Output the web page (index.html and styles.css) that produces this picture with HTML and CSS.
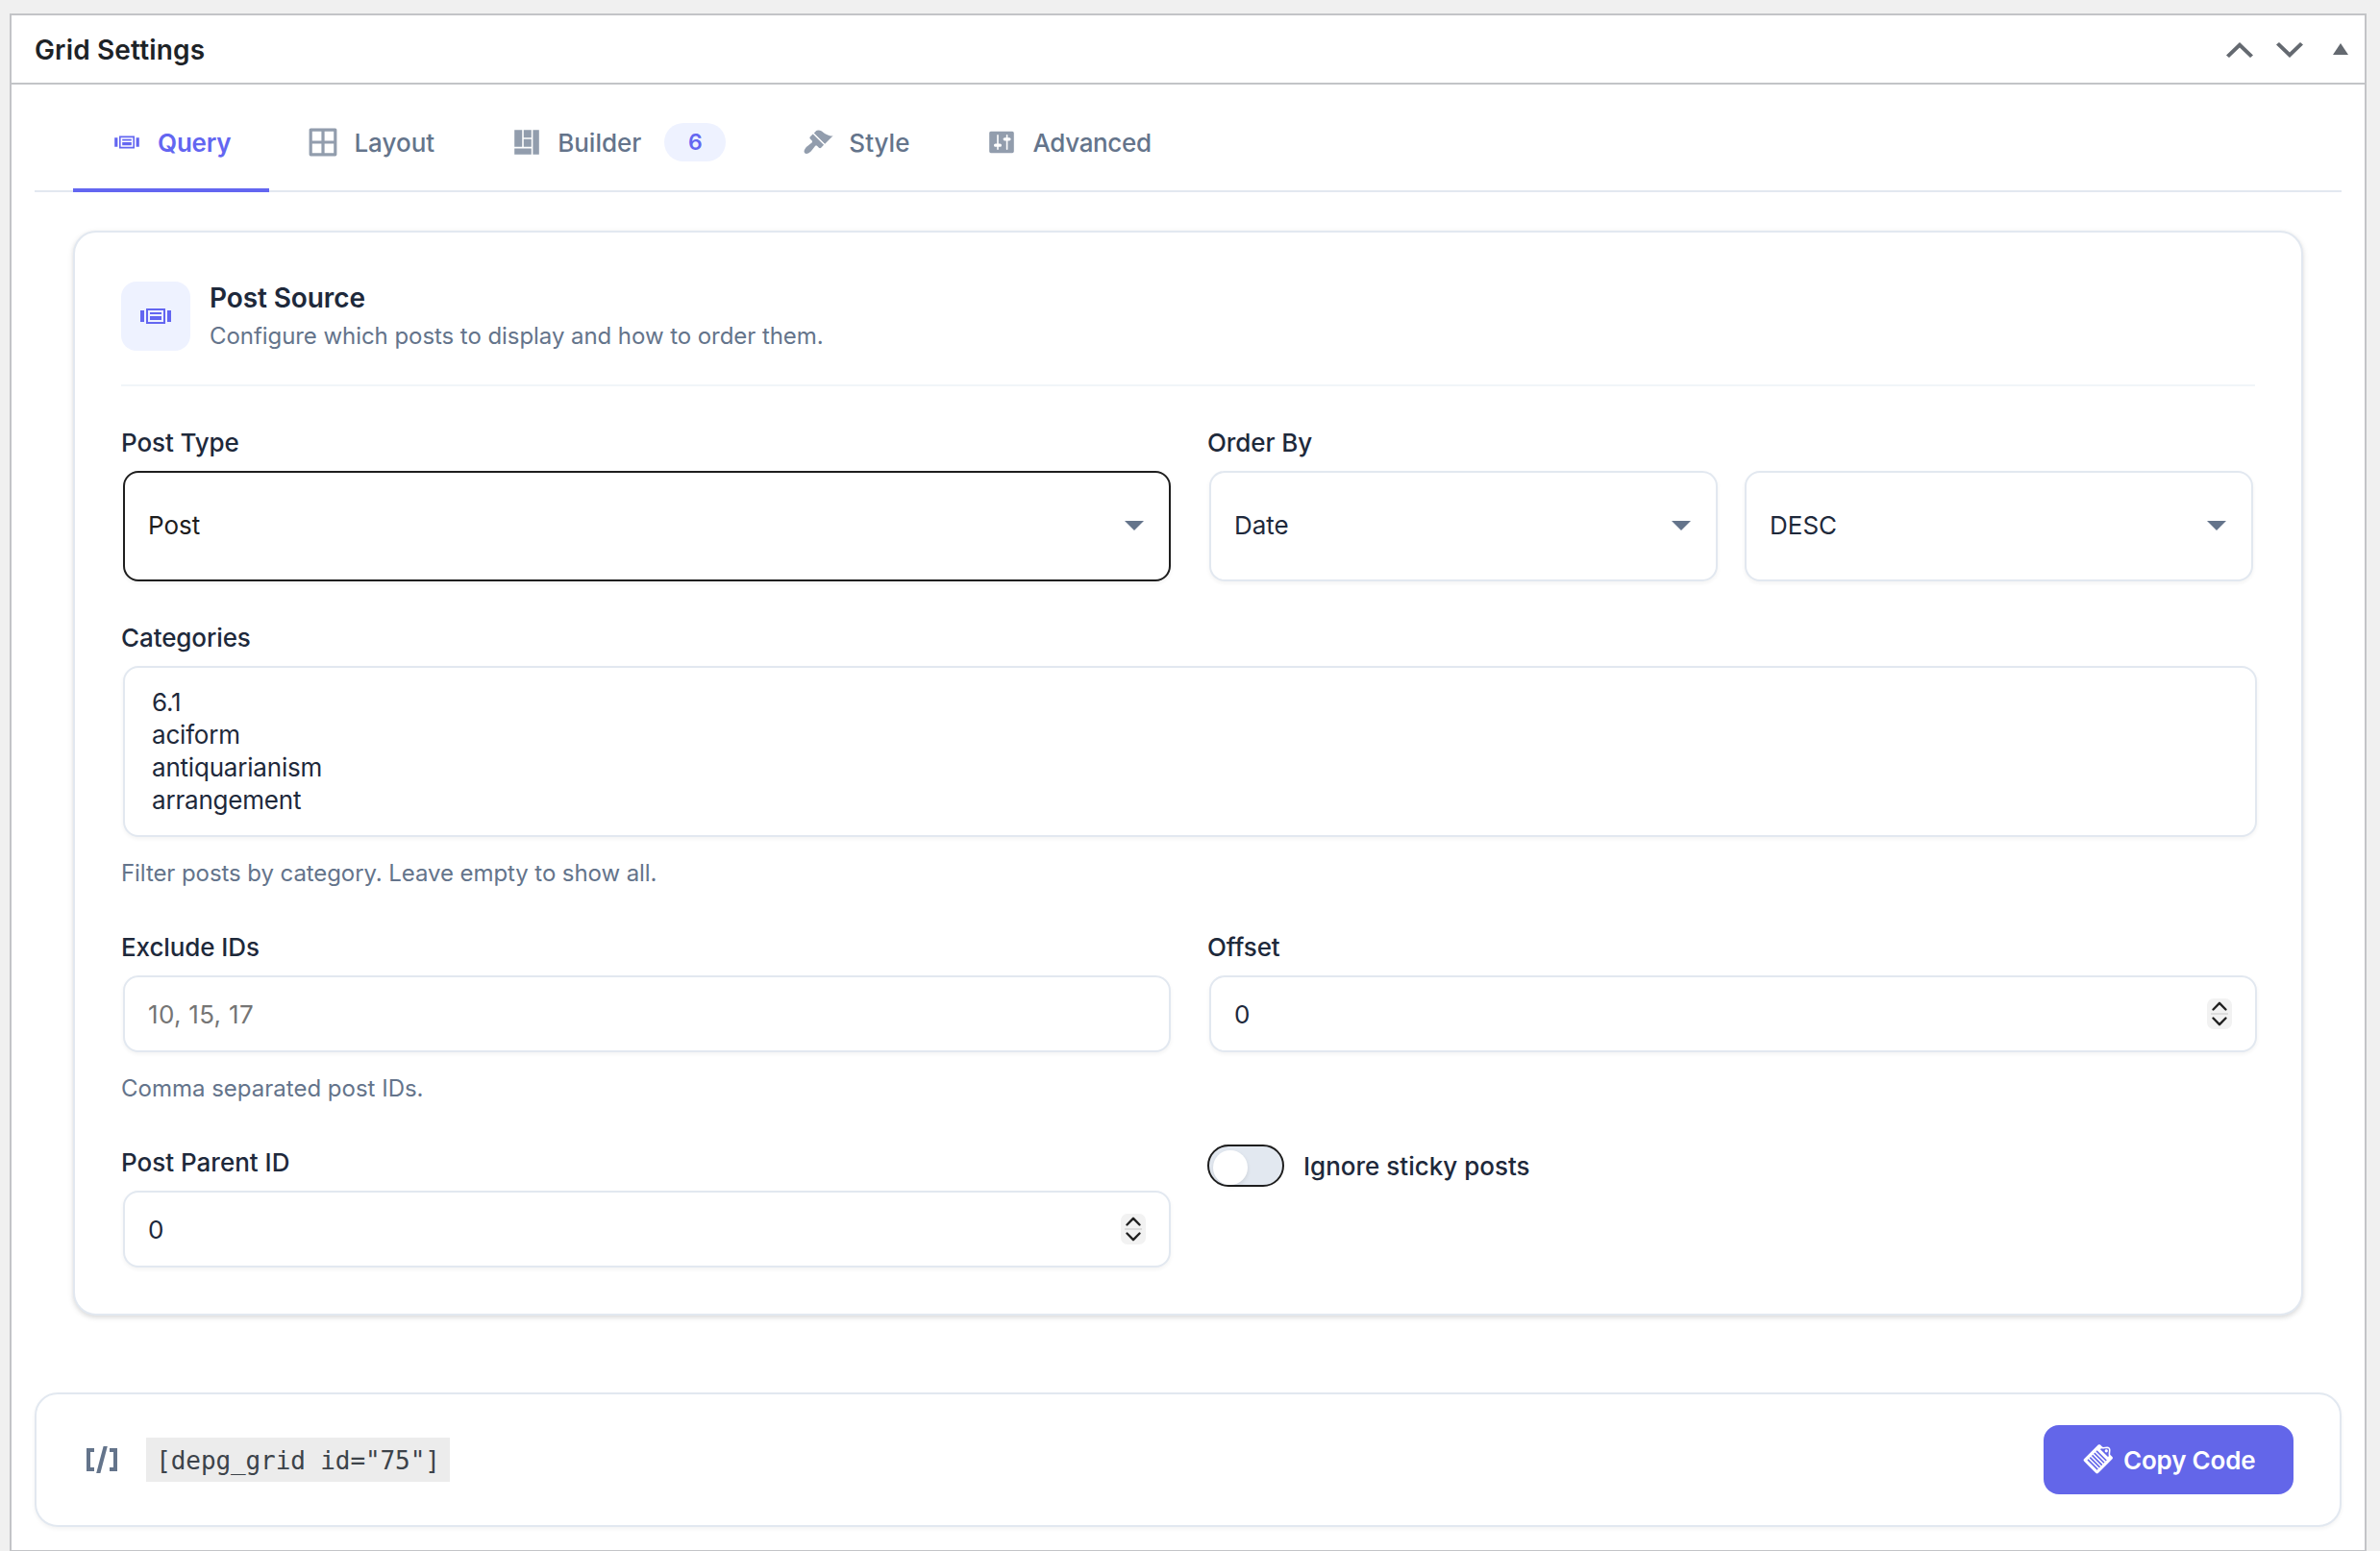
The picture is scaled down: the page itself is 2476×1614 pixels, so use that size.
FILE: index.html
```html
<!DOCTYPE html>
<html lang="en">
<head>
    <meta charset="UTF-8">
    <title>Grid Settings</title>
    <link rel="stylesheet" href="styles.css">
</head>
<body>
    <div class="postbox">
        <div class="postbox-header">
            <h2>Grid Settings</h2>
            <div class="handle-actions">
                <svg class="handle-arrow" viewBox="0 0 28 16"><path d="M14 0L28 13.4L25 16L14 5.6L3 16L0 13.4Z"/></svg>
                <svg class="handle-arrow" viewBox="0 0 28 16"><path d="M14 16L28 2.6L25 0L14 10.4L3 0L0 2.6Z"/></svg>
                <svg class="handle-toggle" viewBox="0 0 16 12"><path d="M8 0L16 12H0Z"/></svg>
            </div>
        </div>

        <div class="inside">
            <div class="tabs">
                <a class="tab active">
                    <svg class="icon" viewBox="0 0 20 20"><path d="M5 14V6h10v8H5zm-3-1V7h2v6H2zm4-6v6h8V7H6zm10 0h2v6h-2V7zm-3 2V8H7v1h6zm0 3v-2H7v2h6z"/></svg>
                    <span>Query</span>
                </a>
                <a class="tab">
                    <svg class="icon" viewBox="0 0 20 20"><path d="M2 1h16c.55 0 1 .45 1 1v16c0 .55-.45 1-1 1H2c-.55 0-1-.45-1-1V2c0-.55.45-1 1-1zm7.01 7.99v-6H3v6h6.01zm8 0v-6h-6v6h6zm-8 8.01v-6H3v6h6.01zm8 0v-6h-6v6h6z"/></svg>
                    <span>Layout</span>
                </a>
                <a class="tab">
                    <svg class="icon" viewBox="0 0 20 20"><path d="M2 2h5v11H2V2zm6 0h5v5H8V2zm6 0h4v16h-4V2zM8 8h5v5H8V8zm-6 6h11v4H2v-4z"/></svg>
                    <span>Builder</span>
                    <span class="badge">6</span>
                </a>
                <a class="tab">
                    <svg class="icon" viewBox="0 0 20 20"><path d="M14.48 11.06L7.41 3.99l1.5-1.5c.5-.56 2.3-.47 3.51.32 1.21.8 1.43 1.28 2.91 2.1 1.18.64 2.45 1.26 4.45.85zm-.71.71L6.7 4.7 4.93 6.47c-.39.39-.39 1.02 0 1.41l1.06 1.06c.39.39.39 1.03 0 1.42-.6.6-1.43 1.11-2.21 1.69-.35.26-.7.53-1.01.84C1.43 14.23.4 16.08 1.4 17.07c.99 1 2.84-.03 4.18-1.36.31-.31.58-.66.85-1.02.57-.78 1.08-1.61 1.69-2.21.39-.39 1.02-.39 1.41 0l1.06 1.06c.39.39 1.02.39 1.41 0z"/></svg>
                    <span>Style</span>
                </a>
                <a class="tab">
                    <svg class="icon" viewBox="0 0 20 20"><path d="M18 16V4c0-.55-.45-1-1-1H3c-.55 0-1 .45-1 1v12c0 .55.45 1 1 1h14c.55 0 1-.45 1-1zM8 11h1c.55 0 1 .45 1 1s-.45 1-1 1H8v1.5c0 .28-.22.5-.5.5s-.5-.22-.5-.5V13H6c-.55 0-1-.45-1-1s.45-1 1-1h1V5.5c0-.28.22-.5.5-.5s.5.22.5.5V11zm5-2h-1c-.55 0-1-.45-1-1s.45-1 1-1h1V5.5c0-.28.22-.5.5-.5s.5.22.5.5V7h1c.55 0 1 .45 1 1s-.45 1-1 1h-1v5.5c0 .28-.22.5-.5.5s-.5-.22-.5-.5V9z"/></svg>
                    <span class="tight">Advanced</span>
                </a>
            </div>

            <div class="card">
                <div class="card-header">
                    <div class="card-icon">
                        <svg viewBox="0 0 20 20"><path d="M5 14V6h10v8H5zm-3-1V7h2v6H2zm4-6v6h8V7H6zm10 0h2v6h-2V7zm-3 2V8H7v1h6zm0 3v-2H7v2h6z"/></svg>
                    </div>
                    <div>
                        <h3>Post Source</h3>
                        <p>Configure which posts to display and how to order them.</p>
                    </div>
                </div>

                <div class="fields">
                    <div class="field">
                        <label class="label">Post Type</label>
                        <div class="control select focused">
                            <span>Post</span>
                            <svg class="caret" viewBox="0 0 20 10"><path d="M0 0H20L10 10Z"/></svg>
                        </div>
                    </div>
                    <div class="field">
                        <label class="label">Order By</label>
                        <div class="field-row">
                            <div class="control select">
                                <span>Date</span>
                                <svg class="caret" viewBox="0 0 20 10"><path d="M0 0H20L10 10Z"/></svg>
                            </div>
                            <div class="control select">
                                <span>DESC</span>
                                <svg class="caret" viewBox="0 0 20 10"><path d="M0 0H20L10 10Z"/></svg>
                            </div>
                        </div>
                    </div>

                    <div class="field full">
                        <label class="label">Categories</label>
                        <ul class="control listbox">
                            <li>6.1</li>
                            <li>aciform</li>
                            <li>antiquarianism</li>
                            <li>arrangement</li>
                        </ul>
                        <p class="help">Filter posts by category. Leave empty to show all.</p>
                    </div>

                    <div class="field">
                        <label class="label">Exclude IDs</label>
                        <div class="control input"><span class="placeholder">10, 15, 17</span></div>
                        <p class="help wide">Comma separated post IDs.</p>
                    </div>
                    <div class="field">
                        <label class="label">Offset</label>
                        <div class="control input">
                            <span>0</span>
                            <svg class="spinner" viewBox="0 0 26 32"><rect width="26" height="32" rx="7"/><path class="line" d="M4 16H22"/><path d="M6.5 11.5L13 4.8L19.5 11.5M6.5 20.5L13 27.2L19.5 20.5"/></svg>
                        </div>
                    </div>

                    <div class="field">
                        <label class="label wide">Post Parent ID</label>
                        <div class="control input">
                            <span>0</span>
                            <svg class="spinner" viewBox="0 0 26 32"><rect width="26" height="32" rx="7"/><path class="line" d="M4 16H22"/><path d="M6.5 11.5L13 4.8L19.5 11.5M6.5 20.5L13 27.2L19.5 20.5"/></svg>
                        </div>
                    </div>
                    <div class="field">
                        <label class="toggle">
                            <span class="switch"><span class="knob"></span></span>
                            <span>Ignore sticky posts</span>
                        </label>
                    </div>
                </div>
            </div>

            <div class="shortcode-bar">
                <svg class="shortcode-icon" viewBox="0 0 20 20"><path d="M6 14H4V6h2V4H2v12h4v-2zM7.1 17h2.1l3.7-14h-2.1L7.1 17zM14 4v2h2v8h-2v2h4V4h-4z"/></svg>
                <code>[depg_grid id="75"]</code>
                <button class="copy-button">
                    <svg viewBox="0 0 20 20"><path d="M11.9.39l1.4 1.4c1.61.19 3.5-.74 4.61.37s.18 3 .37 4.61l1.4 1.4c.39.39.39 1.02 0 1.41l-9.19 9.2c-.4.39-1.03.39-1.42 0L1.29 11c-.39-.39-.39-1.02 0-1.42l9.2-9.19c.39-.39 1.02-.39 1.41 0zm.58 2.25l-.58.58 4.95 4.95.58-.58c-.19-.6-.2-1.22-.15-1.82.02-.31.05-.62.09-.92.12-1 .18-1.63-.17-1.98s-.98-.29-1.98-.17c-.3.04-.61.07-.92.09-.6.05-1.22.04-1.82-.15zm4.02.93c.39.39.39 1.03 0 1.42s-1.03.39-1.42 0-.39-1.03 0-1.42 1.03-.39 1.42 0zm-6.72.36l-.71.7L15.44 11l.7-.71zM8.36 5.34l-.7.71 6.36 6.36.71-.7zM6.95 6.76l-.71.7 6.37 6.37.7-.71zM5.54 8.17l-.71.71 6.36 6.36.71-.71zM4.12 9.58l-.71.71 6.37 6.37.71-.71z"/></svg>
                    Copy Code
                </button>
            </div>
        </div>
    </div>
</body>
</html>
```
FILE: styles.css
```css
* {
    box-sizing: border-box;
}

body {
    margin: 0;
    padding: 14px 14px 0 10px;
    height: 1614px;
    overflow: hidden;
    background-color: #f0f0f0;
    font-family: Inter, 'Liberation Sans', sans-serif;
    font-size: 26px;
    color: #1e293b;
}

h2, h3, p, ul {
    margin: 0;
    padding: 0;
}

svg {
    display: block;
    flex: none;
    fill: currentColor;
}

.postbox {
    background: #fff;
    border: 2px solid #c3c4c7;
}

.postbox-header {
    display: flex;
    justify-content: space-between;
    align-items: center;
    height: 72px;
    padding: 0 17px 0 24px;
    border-bottom: 2px solid #c3c4c7;
}

.postbox-header h2 {
    padding-top: 2px;
    font-size: 28px;
    font-weight: 600;
    letter-spacing: 0.15px;
    color: #1d2327;
}

.handle-actions {
    display: flex;
    align-items: center;
    color: #646970;
}

.handle-arrow {
    width: 28px;
    height: 16px;
    margin-top: 2px;
    margin-right: 24px;
}

.handle-toggle {
    width: 16px;
    height: 12px;
    margin-left: 7px;
}

.inside {
    padding: 12px 24px 24px;
}

/* Tabs */
.tabs {
    display: flex;
    height: 100px;
    padding-left: 40px;
    border-bottom: 2px solid #e2e8f0;
}

.tab {
    display: flex;
    align-items: center;
    gap: 16px;
    height: 100px;
    padding: 0 40px;
    border-bottom: 4px solid transparent;
    font-weight: 500;
    color: #64748b;
}

.tab .icon {
    width: 32px;
    height: 32px;
    opacity: 0.7;
}

.tab.active {
    border-bottom-color: #6366f1;
    font-weight: 600;
    letter-spacing: -0.2px;
    color: #6366f1;
}

.tab.active .icon {
    opacity: 1;
}

.tab .tight {
    letter-spacing: -0.35px;
}

.badge {
    width: 64px;
    height: 40px;
    margin-left: 8px;
    border-radius: 20px;
    background: #eef2ff;
    font-size: 23px;
    font-weight: 600;
    line-height: 41px;
    text-align: center;
    color: #6366f1;
}

/* Card */
.card {
    margin: 40px 40px 80px;
    padding: 48px 48px 46px;
    border: 2px solid #e2e8f0;
    border-radius: 24px;
    background: #fff;
    box-shadow: 0 2px 6px rgba(0, 0, 0, 0.1), 0 2px 4px rgba(0, 0, 0, 0.06);
}

.card-header {
    display: flex;
    align-items: center;
    gap: 20px;
    margin-bottom: 38px;
    padding-bottom: 32px;
    border-bottom: 2px solid #f1f5f9;
}

.card-icon {
    display: flex;
    align-items: center;
    justify-content: center;
    width: 72px;
    height: 72px;
    border-radius: 16px;
    background: #eef2ff;
    color: #6366f1;
}

.card-icon svg {
    width: 40px;
    height: 40px;
}

.card-header h3 {
    font-size: 28px;
    font-weight: 600;
    line-height: 40px;
    letter-spacing: -0.1px;
}

.card-header p {
    margin-top: 2px;
    font-size: 24px;
    line-height: 36px;
    letter-spacing: -0.06px;
    color: #64748b;
}

/* Fields */
.fields {
    display: grid;
    grid-template-columns: 1fr 1fr;
    gap: 36px 40px;
}

.field {
    display: flex;
    flex-direction: column;
}

.full {
    grid-column: 1 / -1;
}

.label {
    margin-bottom: 6px;
    font-weight: 500;
    line-height: 42px;
    letter-spacing: -0.1px;
}

.field-row {
    display: flex;
    gap: 24px;
}

.control {
    margin: 2px;
    border: 2px solid #e2e8f0;
    border-radius: 16px;
    background: #fff;
    box-shadow: 0 2px 4px rgba(0, 0, 0, 0.05);
}

/* full width controls keep their 2px margin and run past the column */
.field > .control {
    margin-right: -2px;
}

.select {
    display: flex;
    align-items: center;
    justify-content: space-between;
    height: 115px;
    padding: 0 26px 3px 24px;
}

.field-row .select {
    flex: 1;
}

.select.focused {
    border-color: #1e1e1e;
    color: #1e1e1e;
}

.caret {
    width: 20px;
    height: 10px;
    margin-top: 2px;
    color: #64748b;
}

.listbox {
    height: 178px;
    padding: 19px 28px;
    line-height: 34px;
    letter-spacing: -0.2px;
    list-style: none;
}

.input {
    display: flex;
    align-items: center;
    justify-content: space-between;
    height: 80px;
    padding: 0 24px;
}

.placeholder {
    letter-spacing: 0.3px;
    color: #757575;
}

.spinner {
    width: 26px;
    height: 32px;
}

.spinner rect {
    fill: #f2f2f2;
}

.spinner path {
    fill: none;
    stroke: #222;
    stroke-width: 2.4;
    stroke-linecap: round;
    stroke-linejoin: round;
}

.spinner .line {
    stroke: #dcdcdc;
    stroke-width: 2;
    stroke-linecap: butt;
}

.help {
    margin-top: 16px;
    font-size: 24px;
    line-height: 40px;
    letter-spacing: -0.08px;
    color: #64748b;
}

.wide {
    letter-spacing: 0;
}

.toggle {
    display: flex;
    align-items: center;
    gap: 20px;
    height: 48px;
    font-weight: 500;
}

.switch {
    width: 80px;
    height: 44px;
    padding: 4px;
    border: 2px solid #1e1e1e;
    border-radius: 22px;
    background: #e2e8f0;
}

.knob {
    display: block;
    width: 36px;
    height: 36px;
    border-radius: 50%;
    background: #fff;
    box-shadow: 0 2px 4px rgba(0, 0, 0, 0.1);
}

/* Shortcode */
.shortcode-bar {
    display: flex;
    align-items: center;
    height: 140px;
    padding: 0 48px;
    border: 2px solid #e2e8f0;
    border-radius: 24px;
    background: #fff;
    box-shadow: 0 2px 4px rgba(0, 0, 0, 0.05);
}

.shortcode-icon {
    width: 40px;
    height: 40px;
    color: #64748b;
}

.shortcode-bar code {
    margin-left: 26px;
    width: 316px;
    height: 46px;
    background: #ececec;
    font-family: 'DejaVu Sans Mono', monospace;
    font-size: 26px;
    letter-spacing: -0.1px;
    line-height: 48px;
    text-align: center;
    white-space: nowrap;
    color: #3c434a;
}

.copy-button {
    display: flex;
    align-items: center;
    gap: 11px;
    width: 260px;
    height: 72px;
    margin-left: auto;
    padding: 0 0 0 40px;
    border: none;
    border-radius: 16px;
    background: #6366e9;
    font: 600 26px Inter, sans-serif;
    letter-spacing: -0.2px;
    white-space: nowrap;
    color: #fff;
}

.copy-button svg {
    width: 32px;
    height: 32px;
}
```
